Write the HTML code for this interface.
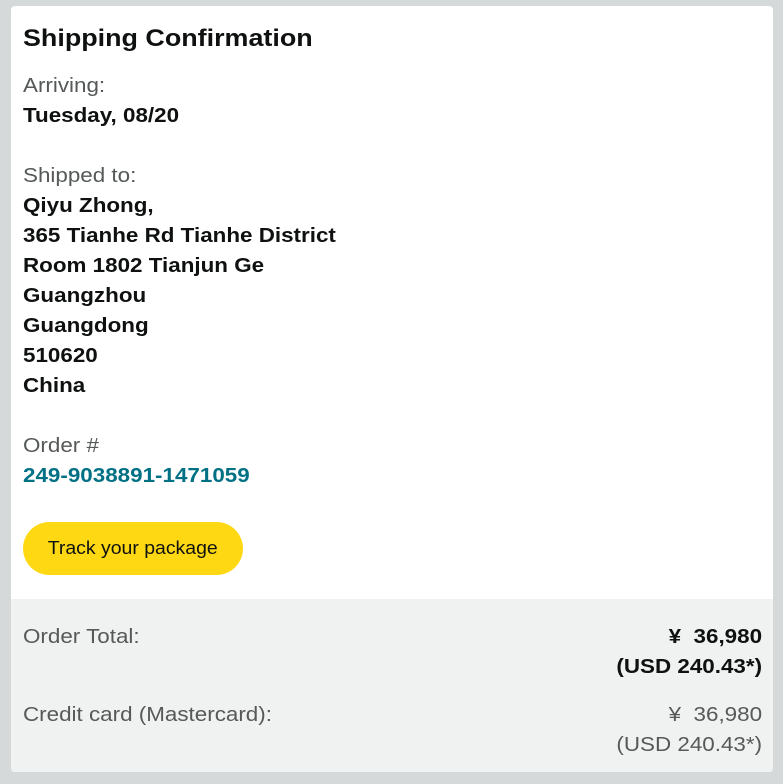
<!DOCTYPE html>
<html><head><meta charset="utf-8"><style>
html,body{margin:0;padding:0;}
body{width:783px;height:784px;background:#d5d9d9;font-family:"Liberation Sans",Arial,sans-serif;position:relative;overflow:hidden;}
.card{position:absolute;left:11px;top:6px;width:762px;height:766px;background:#fff;border-radius:4px;overflow:hidden;}
.t{position:absolute;left:12px;white-space:nowrap;font-size:20px;line-height:30px;transform:scaleX(1.12);transform-origin:0 0;}
.g{color:#565959;}
.b{color:#0f1111;font-weight:bold;}
.foot{position:absolute;left:0;top:593px;width:762px;height:173px;background:#f0f2f2;}
.r{position:absolute;right:11px;white-space:pre;font-size:20px;line-height:30px;text-align:right;transform:scaleX(1.12);transform-origin:100% 0;}
.btn{position:absolute;left:12px;top:516px;width:220px;height:53px;border-radius:27px;background:#ffd814;color:#0f1111;line-height:53px;text-align:center;}
.btn span{display:inline-block;font-size:18px;transform:scaleX(1.08);}
</style></head><body>
<div class="card">
<div class="t b" style="top:18px;font-size:24px;line-height:30px;">Shipping Confirmation</div>
<div class="t g" style="top:65px">Arriving:</div>
<div class="t b" style="top:95px">Tuesday, 08/20</div>
<div class="t g" style="top:155px">Shipped to:</div>
<div class="t b" style="top:185px">Qiyu Zhong,</div>
<div class="t b" style="top:215px">365 Tianhe Rd Tianhe District</div>
<div class="t b" style="top:245px">Room 1802 Tianjun Ge</div>
<div class="t b" style="top:275px">Guangzhou</div>
<div class="t b" style="top:305px">Guangdong</div>
<div class="t b" style="top:335px">510620</div>
<div class="t b" style="top:365px">China</div>
<div class="t g" style="top:425px">Order #</div>
<div class="t" style="top:455px;color:#007185;font-weight:bold">249-9038891-1471059</div>
<div class="btn"><span>Track your package</span></div>
<div class="foot">
<div class="t g" style="top:23px">Order Total:</div>
<div class="r b" style="top:23px">¥  36,980
(USD 240.43*)</div>
<div class="t g" style="top:101px">Credit card (Mastercard):</div>
<div class="r g" style="top:101px">¥  36,980
(USD 240.43*)</div>
</div>
</div>
</body></html>
